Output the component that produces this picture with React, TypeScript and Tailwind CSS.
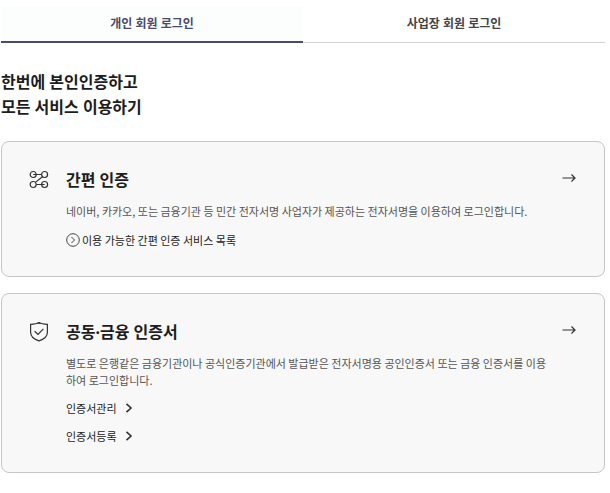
import type { ReactNode } from "react";

const NodesIcon = () => (
  <svg width="20" height="20" viewBox="0 0 20 20" fill="none" stroke="#333333" strokeWidth="1.2" aria-hidden="true">
    <circle cx="4.2" cy="4.5" r="3" />
    <circle cx="15.6" cy="4.5" r="3" />
    <circle cx="4.2" cy="14.5" r="3" />
    <circle cx="15.6" cy="14.5" r="3" />
    <path d="M4.2 4.500h8.400M13.500 6.700l-7.200 5.700M7.200 14.500h8.400" />
  </svg>
);

const ShieldIcon = () => (
  <svg width="20" height="20" viewBox="0 0 20 20" fill="none" stroke="#333333" strokeWidth="1.2" aria-hidden="true">
    <path d="M10 0.600C8 1.900 5.400 2.300 1.600 2.300v7.900c0 4 3.300 7 8.400 8.700 5.100-1.700 8.400-4.700 8.400-8.700V2.300C14.600 2.300 12 1.900 10 0.600z" />
    <path d="M8.500 1.200h3" />
    <path d="M5.600 9.300l3.400 3.100 5.400-5.600" />
  </svg>
);

const ArrowIcon = () => (
  <svg width="14" height="10" viewBox="0 0 14 10" fill="none" stroke="#333333" strokeWidth="1.2" aria-hidden="true">
    <path d="M0.500 5H13M9.500 1.500L13 5l-3.500 3.500" />
  </svg>
);

const CircleChevronIcon = () => (
  <svg width="14" height="14" viewBox="0 0 14 14" fill="none" stroke="#444444" aria-hidden="true">
    <circle cx="7" cy="7" r="6.300" />
    <path d="M5.500 4l3 3-3 3" />
  </svg>
);

const ChevronIcon = () => (
  <svg width="8" height="10" viewBox="0 0 8 10" fill="none" stroke="#333333" strokeWidth="1.600" aria-hidden="true">
    <path d="M1.500 0.800L6 5l-4.500 4.200" />
  </svg>
);

type CardProps = {
  icon: ReactNode;
  title: string;
  description: string;
  children: ReactNode;
};

const LoginCard = ({ icon, title, description, children }: CardProps) => {
  return (
    <section className="flex items-start rounded-lg border border-[#c6c6c6] bg-[#f8f8f8] py-7 pr-7 pl-[27px]">
      <div className="w-[37px] shrink-0">{icon}</div>
      <div className="min-w-0 flex-1">
        <h3 className="font-['Noto_Sans','Noto_Sans_CJK_KR',sans-serif] text-base leading-5 font-bold text-[#1d1d1d]">{title}</h3>
        <p className="mt-[13px] text-[11px] leading-[17px] text-[#555555]">{description}</p>
        {children}
      </div>
      <a href="#login" aria-label={title} className="ml-3 flex h-4 shrink-0 items-center">
        <ArrowIcon />
      </a>
    </section>
  );
};

const certLinks = ["인증서관리", "인증서등록"];

const App = () => {
  return (
    <main className="bg-white pt-1.5 pr-[5px] pb-5 pl-px font-['Noto_Sans_CJK_KR',sans-serif]">
      {/* Member type tabs */}
      <div role="tablist" className="flex h-[37px] font-['Noto_Sans','Noto_Sans_CJK_KR',sans-serif] text-xs font-bold">
        <button type="button" role="tab" aria-selected="true" className="flex-1 border-b-2 border-[#4b4a6b] bg-[#fbfefd] text-[#4b4a6b]">
          개인 회원 로그인
        </button>
        <button type="button" role="tab" aria-selected="false" className="flex-1 border-b border-[#d2d2d2] text-[#444444]">
          사업장 회원 로그인
        </button>
      </div>

      <h2 className="mt-[27px] font-['Noto_Sans','Noto_Sans_CJK_KR',sans-serif] text-base leading-[25px] font-bold text-[#1d1d1d]">
        한번에 본인인증하고
        <br />
        모든 서비스 이용하기
      </h2>

      <div className="mt-[21px] flex flex-col gap-4">
        <LoginCard
          icon={<NodesIcon />}
          title="간편 인증"
          description="네이버, 카카오, 또는 금융기관 등 민간 전자서명 사업자가 제공하는 전자서명을 이용하여 로그인합니다."
        >
          <a href="#services" className="mt-3 flex items-center gap-0.5 text-[11px] leading-4 text-[#222222]">
            <CircleChevronIcon />
            이용 가능한 간편 인증 서비스 목록
          </a>
        </LoginCard>

        <LoginCard
          icon={<ShieldIcon />}
          title="공동·금융 인증서"
          description="별도로 은행같은 금융기관이나 공식인증기관에서 발급받은 전자서명용 공인인증서 또는 금융 인증서를 이용하여 로그인합니다."
        >
          <ul className="mt-[11px] flex flex-col gap-3">
            {certLinks.map((label) => (
              <li key={label} className="flex">
                <a href="#certificate" className="flex items-center gap-2 text-[11px] leading-4 text-[#222222]">
                  {label}
                  <ChevronIcon />
                </a>
              </li>
            ))}
          </ul>
        </LoginCard>
      </div>
    </main>
  );
};

export default App;
